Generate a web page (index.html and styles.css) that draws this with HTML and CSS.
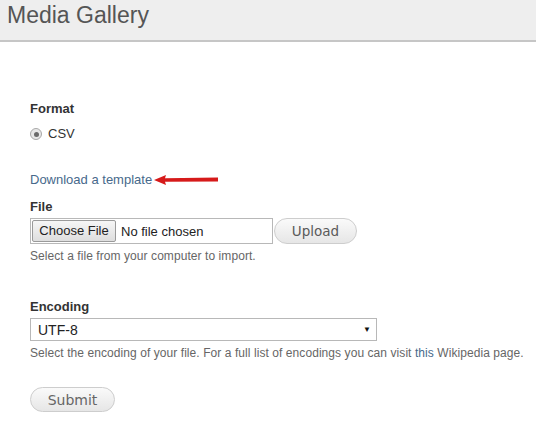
FILE: index.html
```html
<!DOCTYPE html>
<html lang="en">
<head>
    <meta charset="UTF-8">
    <meta name="viewport" content="width=device-width, initial-scale=1.0">
    <title>Media Gallery - Import</title>
    <link rel="stylesheet" href="styles.css">
</head>
<body>
    <div class="header">
        <h1>Media Gallery</h1>
    </div>
    <form class="content">
        <div class="label">Format</div>
        <div class="radio-row">
            <span class="radio"><span class="dot"></span></span>
            <span>CSV</span>
        </div>

        <div class="template-row">
            <a href="#">Download a template</a>
            <svg class="arrow" width="66" height="10" viewBox="0 0 66 10">
                <path d="M0 5 L12 0 L11 3.3 L64 2.6 L64 6.4 L11 6.8 L12 10 Z" fill="#d61a1a"/>
            </svg>
        </div>

        <div class="label label-file">File</div>
        <div class="file-row">
            <div class="file-box">
                <span class="choose">Choose File</span>
                <span class="no-file">No file chosen</span>
            </div>
            <button type="button" class="pill upload">Upload</button>
        </div>
        <div class="desc">Select a file from your computer to import.</div>

        <div class="label label-encoding">Encoding</div>
        <div class="select">
            <span>UTF-8</span>
            <span class="caret">&#9660;</span>
        </div>
        <div class="desc">Select the encoding of your file. For a full list of encodings you can visit <a href="#">this</a> Wikipedia page.</div>

        <button type="button" class="pill submit">Submit</button>
    </form>
</body>
</html>
```

FILE: styles.css
```css
body {
    font-family: "Liberation Sans", Arial, sans-serif;
    background-color: #fff;
    margin: 0;
    padding: 0;
    color: #333;
}
.header {
    height: 40px;
    background-color: #eee;
    border-bottom: 2px solid #c6c6c6;
}
.header h1 {
    margin: 0;
    padding-left: 7px;
    font-size: 23px;
    font-weight: normal;
    line-height: 30px;
    color: #555;
}
.content {
    padding: 59px 0 0 30px;
}
.label {
    font-size: 13px;
    font-weight: bold;
    line-height: 16px;
    color: #333;
}
.radio-row {
    display: flex;
    align-items: center;
    gap: 6px;
    margin-top: 9px;
    font-size: 13px;
    line-height: 16px;
    color: #333;
}
.radio {
    width: 10px;
    height: 10px;
    border: 1px solid #a8a8a8;
    border-radius: 50%;
    background: #e8e8e8;
    display: flex;
    align-items: center;
    justify-content: center;
}
.dot {
    width: 5px;
    height: 5px;
    border-radius: 50%;
    background: #6a6a6a;
}
.template-row {
    display: flex;
    align-items: center;
    gap: 2px;
    margin-top: 30px;
    font-size: 13px;
    line-height: 16px;
}
a {
    color: #47698b;
    text-decoration: none;
}
.arrow {
    display: block;
}
.label-file {
    margin-top: 11px;
}
.file-row {
    display: flex;
    align-items: center;
    gap: 1px;
    margin-top: 3px;
}
.file-box {
    width: 240px;
    height: 24px;
    border: 1px solid #b8b8b8;
    display: flex;
    align-items: center;
    padding-left: 1px;
    font-size: 13px;
}
.choose {
    height: 22px;
    width: 84px;
    box-sizing: border-box;
    border: 1px solid #9a9a9a;
    border-radius: 2px;
    background: linear-gradient(#f6f6f6, #dedede);
    text-align: center;
    line-height: 20px;
    color: #222;
}
.no-file {
    margin-left: 5px;
    color: #222;
}
.pill {
    font-family: "DejaVu Sans", Verdana, sans-serif;
    border: 1px solid #cdcdcd;
    background: linear-gradient(#fafafa, #e6e6e6);
    border-radius: 13px;
    padding: 0;
    color: #5a5a5a;
}
.upload {
    width: 83px;
    height: 26px;
    font-size: 13.5px;
}
.desc {
    margin-top: 5px;
    font-size: 12px;
    line-height: 14px;
    color: #666;
    white-space: nowrap;
    letter-spacing: 0.07px;
}
.label-encoding {
    margin-top: 36px;
}
.select {
    width: 333px;
    height: 21px;
    margin-top: 3px;
    border: 1px solid #b8b8b8;
    display: flex;
    align-items: center;
    justify-content: space-between;
    padding: 0 5px 0 7px;
    font-size: 14px;
    color: #222;
}
.caret {
    font-size: 8px;
    color: #111;
}
.submit {
    display: block;
    width: 85px;
    height: 25px;
    margin-top: 27px;
    font-size: 14px;
    color: #666;
}
```
